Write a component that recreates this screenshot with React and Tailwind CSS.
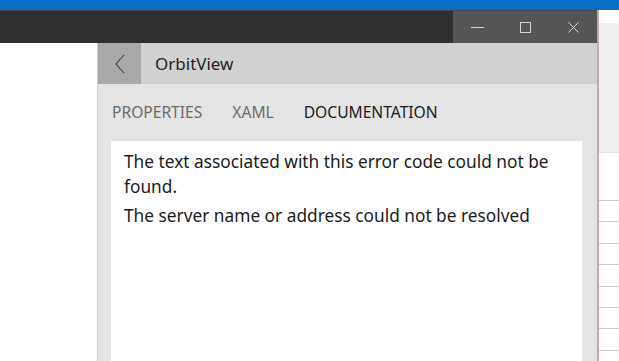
const tabs = [
  { label: 'PROPERTIES', active: false },
  { label: 'XAML', active: false },
  { label: 'DOCUMENTATION', active: true },
];

export default function App() {
  return (
    <div
      className="w-[619px] h-[361px] overflow-hidden flex flex-col bg-white"
      style={{ fontFamily: '"Noto Sans", "Open Sans", sans-serif' }}
    >
      {/* accent band of the window behind */}
      <div className="h-[10px] shrink-0 bg-[#0a6fc4]" />

      <div className="flex flex-1 min-h-0">
        {/* main window */}
        <div className="w-[597px] flex flex-col">
          {/* title bar */}
          <div className="h-[33px] shrink-0 flex border-t border-[#4b4656]">
            <div className="flex-1 bg-[#2f2f2f]" />
            <div className="w-[144px] bg-[#555555] flex text-[#d6d6d6]">
              <div className="w-[48px] flex items-center justify-center">
                <svg width="13" height="13" viewBox="0 0 13 13">
                  <line x1="0" y1="6.5" x2="13" y2="6.5" stroke="currentColor" strokeWidth="1" />
                </svg>
              </div>
              <div className="w-[48px] flex items-center justify-center">
                <svg width="11" height="11" viewBox="0 0 11 11">
                  <rect x="0.5" y="0.5" width="10" height="10" fill="none" stroke="currentColor" strokeWidth="1" />
                </svg>
              </div>
              <div className="w-[48px] flex items-center justify-center">
                <svg width="11" height="11" viewBox="0 0 11 11">
                  <path d="M0.5 0.5 L10.5 10.5 M10.5 0.5 L0.5 10.5" stroke="currentColor" strokeWidth="1" />
                </svg>
              </div>
            </div>
          </div>

          {/* body */}
          <div className="flex flex-1 min-h-0">
            <div className="w-[97px] bg-white" />
            <div className="flex-1 flex flex-col border-l border-[#cfcfcf]">
              {/* header */}
              <div className="h-[41px] shrink-0 flex items-center bg-[#d1d1d1]">
                <div className="w-[43px] h-full bg-[#a9a9a9] flex items-center justify-center text-[#3a3a3a]">
                  <svg width="10" height="20" viewBox="0 0 10 20">
                    <path d="M9 1 L1 10 L9 19" fill="none" stroke="currentColor" strokeWidth="1.1" />
                  </svg>
                </div>
                <span className="ml-[14px] text-[17px] text-[#222]">OrbitView</span>
              </div>

              {/* tabs */}
              <div className="h-[57px] shrink-0 flex items-center gap-[30px] pl-[14px] bg-[#e4e4e4]">
                {tabs.map((t) => (
                  <span
                    key={t.label}
                    className={`text-[15.6px] ${t.active ? 'text-[#1a1a1a]' : 'text-[#6b6b6b]'}`}
                  >
                    {t.label}
                  </span>
                ))}
              </div>

              {/* documentation */}
              <div className="flex-1 min-h-0 bg-[#e4e4e4] pl-[13px] pr-[15px]">
                <div className="h-full bg-white px-[13px] pt-[8px] text-[17.3px] leading-[25px] text-[#1c1c1c]">
                  <p>The text associated with this error code could not be found.</p>
                  <p className="mt-[4px]">The server name or address could not be resolved</p>
                </div>
              </div>
            </div>
          </div>
        </div>

        {/* window border */}
        <div className="w-[2px] bg-[#c9a3ad]" />

        {/* window behind */}
        <div className="flex-1 flex flex-col">
          <div className="h-[13px] bg-white" />
          <div className="h-[130px] bg-[#efefef] border-b border-[#e2e2e2]" />
          <div className="h-[48px] bg-white border-b border-[#c9c9c9]" />
          {[0, 1, 2, 3, 4, 5, 6].map((i) => (
            <div key={i} className="h-[21.4px] shrink-0 bg-white border-b border-[#c9c9c9]" />
          ))}
        </div>
      </div>
    </div>
  );
}
